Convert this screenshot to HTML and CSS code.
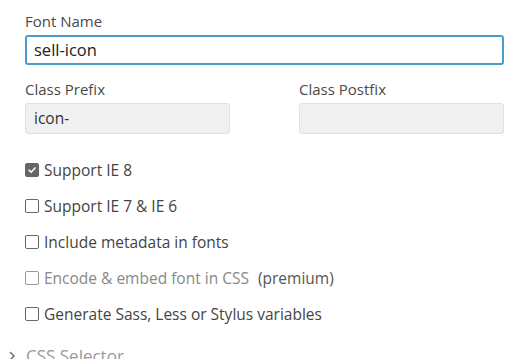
FILE: index.html
```html
<!DOCTYPE html>
<html>
<head>
<meta charset="utf-8">
<link rel="stylesheet" href="styles.css">
</head>
<body>
<div class="form">
  <div class="field">
    <label class="label">Font Name</label>
    <div class="input active">sell-icon</div>
  </div>
  <div class="row">
    <div class="field">
      <label class="label">Class Prefix</label>
      <div class="input disabled">icon-</div>
    </div>
    <div class="field">
      <label class="label">Class Postfix</label>
      <div class="input disabled"></div>
    </div>
  </div>
  <ul class="checks">
    <li class="check"><span class="box checked"><svg viewBox="0 0 14 14" width="14" height="14"><path d="M3.5 7.2 L6 9.6 L10.6 4.6" fill="none" stroke="#fff" stroke-width="1.8" stroke-linecap="round" stroke-linejoin="round"/></svg></span>Support IE 8</li>
    <li class="check"><span class="box"></span>Support IE 7 &amp; IE 6</li>
    <li class="check"><span class="box"></span>Include metadata in fonts</li>
    <li class="check muted"><span class="box"></span>Encode &amp; embed font in CSS<span class="prem">(premium)</span></li>
    <li class="check"><span class="box"></span>Generate Sass, Less or Stylus variables</li>
  </ul>
  <div class="section"><svg class="chev" viewBox="0 0 8 10" width="8" height="10"><path d="M2 1 L6 5 L2 9" fill="none" stroke="#777" stroke-width="1.6"/></svg>CSS Selector</div>
</div>
</body>
</html>
```
FILE: styles.css
```css
html, body { margin: 0; padding: 0; background: #fff; }
body { font-family: "Open Sans", "Noto Sans", sans-serif; color: #444; overflow: hidden; height: 359px; }
.form { padding: 11px 5px 0 25px; }
.field { display: flex; flex-direction: column; }
.label { font-size: 15px; line-height: 20px; color: #4a4a4a; margin-bottom: 4px; }
.input { box-sizing: border-box; height: 30px; border-radius: 3px; font-size: 16.5px; line-height: 26px; padding: 0 7px; color: #222; }
.input.active { border: 2px solid #4a9ccb; height: 30px; }
.input.disabled { background: #f0f0f0; border: 1px solid #e0e0e0; font-size: 15.5px; height: 31px; line-height: 29px; padding: 0 8px; color: #333; }
.row { display: grid; grid-template-columns: 205px 205px; column-gap: 69px; margin-top: 14px; }
.checks { list-style: none; margin: 18px 0 0; padding: 0; }
.check { display: flex; align-items: center; font-size: 15.5px; line-height: 20px; height: 36px; color: #444; }
.box { box-sizing: border-box; width: 14px; height: 14px; border: 1.5px solid #666; border-radius: 2px; margin-right: 5px; display: flex; align-items: center; justify-content: center; flex: none; }
.box.checked { background: #666; border-color: #666; }
.box svg { display: block; }
.check.muted { color: #888; }
.check.muted .box { border-color: #999; }
.check.muted .prem { color: #555; margin-left: 9px; }
.section { margin-top: 12px; margin-left: -17px; font-size: 17px; color: #999; display: flex; align-items: center; }
.chev { margin-right: 10px; flex: none; }
```
